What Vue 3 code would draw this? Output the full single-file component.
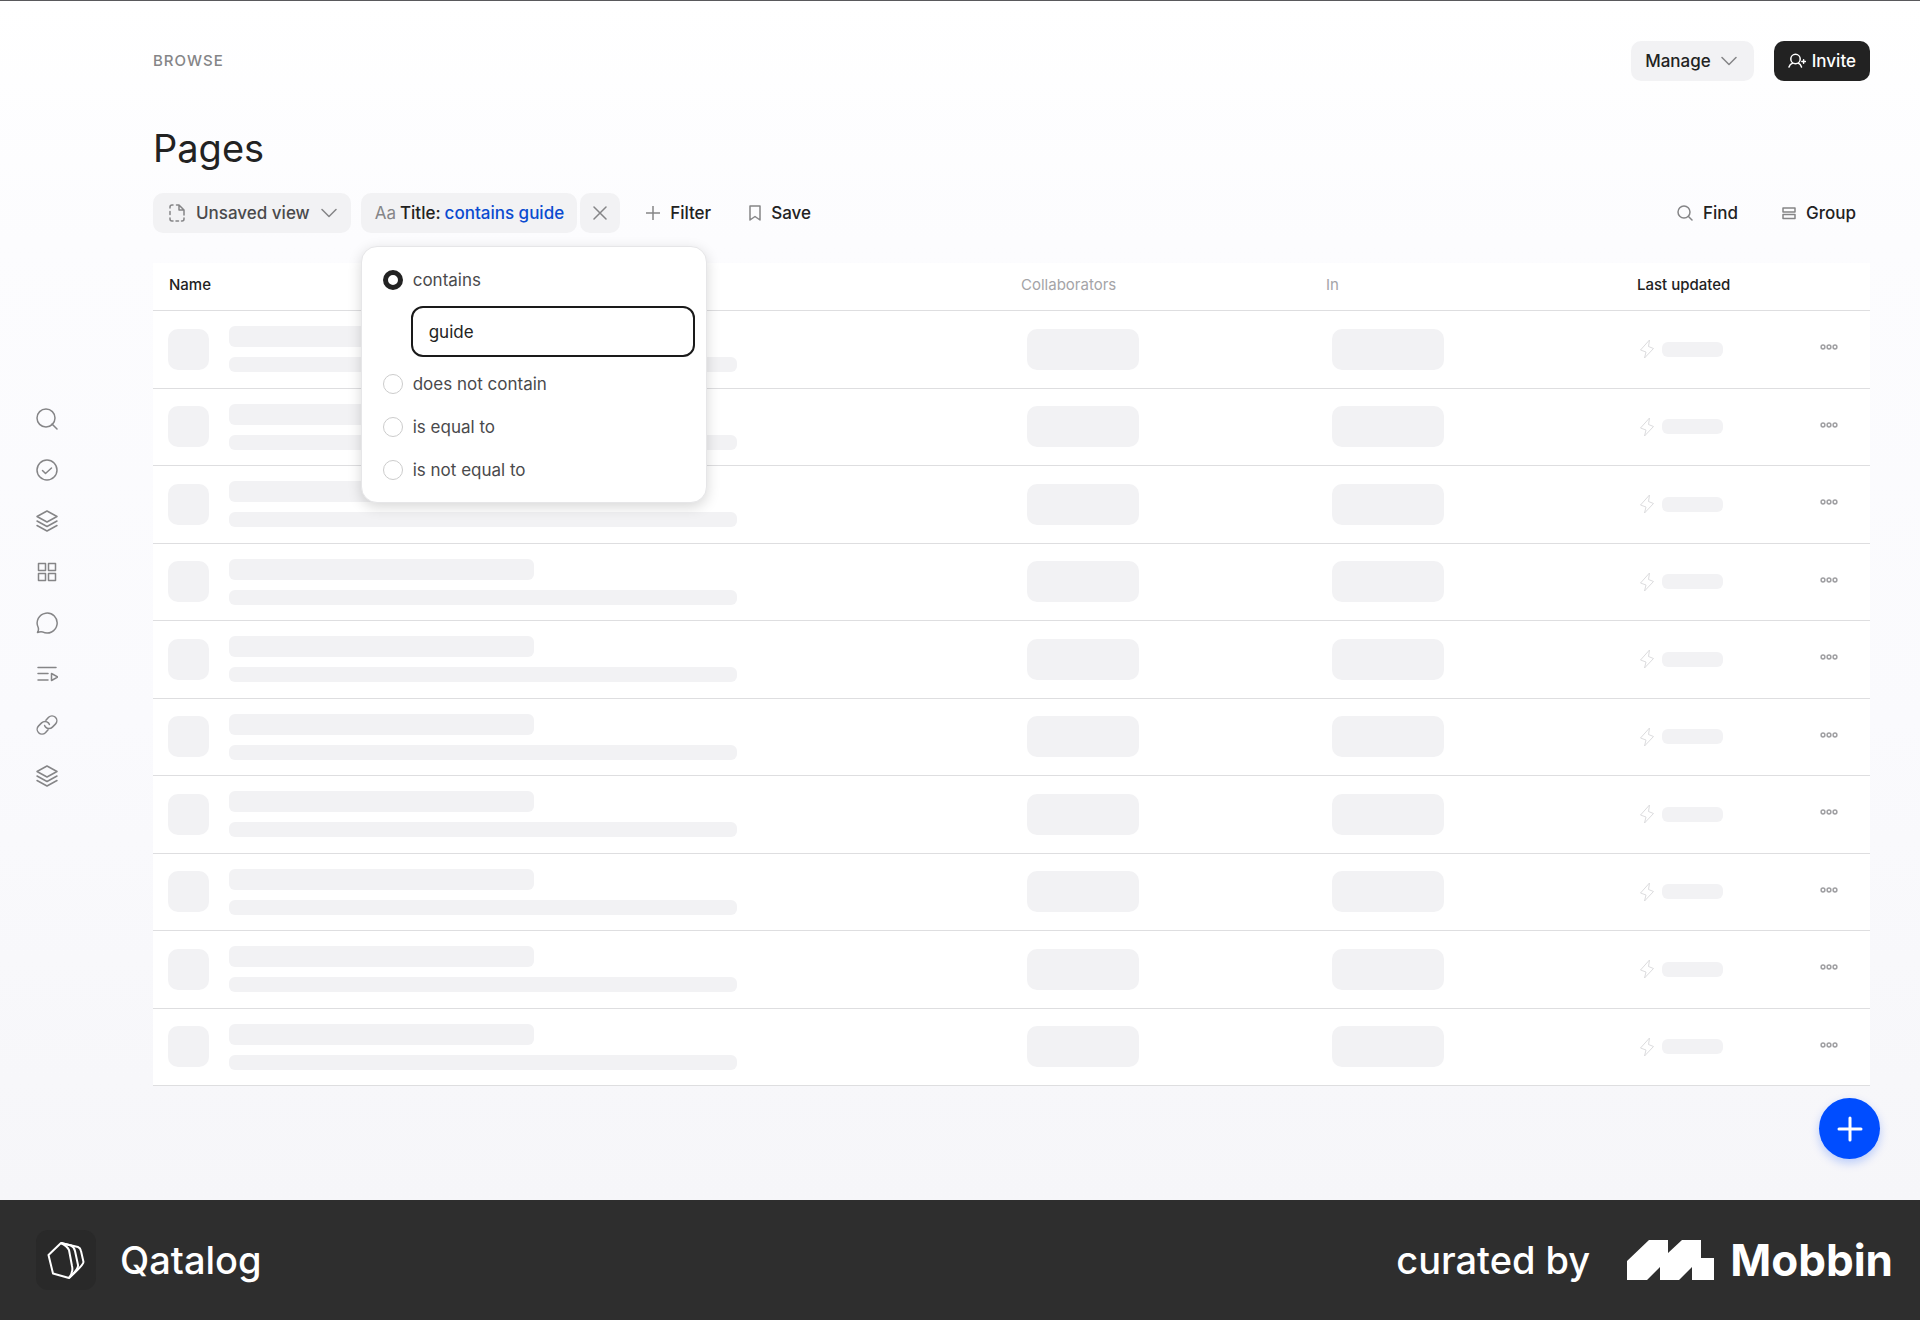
<script setup>
import { ref } from 'vue'

const rows = Array.from({ length: 10 }, (_, i) => i)
const condition = ref('contains')
const query = ref('guide')
const conditions = ['contains', 'does not contain', 'is equal to', 'is not equal to']

const layers = ['M11 1 21 6.500 11 12 1 6.500Z', 'M1 11 11 16.500 21 11', 'M1 15.500 11 21 21 15.500']
const navItems = [
  { label: 'Search', paths: ['M19 10a9 9 0 1 1-18 0 9 9 0 0 1 18 0Z', 'M16 16l5 5'] },
  { label: 'Tasks', paths: ['M21 11a10 10 0 1 1-20 0 10 10 0 0 1 20 0Z', 'M6.500 11.500l3 3 6-5.500'] },
  { label: 'Collections', paths: layers },
  { label: 'Apps', paths: ['M2.500 2.500h7v7h-7Z', 'M12.500 2.500h7v7h-7Z', 'M2.500 12.500h7v7h-7Z', 'M12.500 12.500h7v7h-7Z'] },
  { label: 'Chat', paths: ['M1.500 20.500Q3 18 2.200 15.500A10 10 0 1 1 6.500 19.900Q4 19.500 1.500 20.500Z'] },
  { label: 'Workflows', paths: ['M2 4.500h18', 'M2 10.500h10', 'M2 17h10', 'M15.500 10.500v7l6.500-3.500Z'] },
  { label: 'Links', paths: ['M9.900 6.300 12.600 3.300a4.800 4.800 0 0 1 6.800 6.800l-3 3a4.800 4.800 0 0 1-6.800 0 4.600 4.600 0 0 1-1-1.600', 'M12.100 15.700 9.400 18.700a4.800 4.800 0 0 1-6.800-6.800l3-3a4.800 4.800 0 0 1 6.800 0 4.600 4.600 0 0 1 1 1.600'] },
  { label: 'Library', paths: layers },
]
</script>

<template>
  <div class="page">
    <div class="app">
      <nav class="sidebar" aria-label="Main">
        <a v-for="item in navItems" :key="item.label" href="#" :aria-label="item.label">
          <svg class="icon" width="22" height="22" viewBox="0 0 22 22">
            <path v-for="d in item.paths" :key="d" :d="d" />
          </svg>
        </a>
      </nav>

      <main class="main">
        <header class="topbar">
          <span class="crumb">BROWSE</span>
          <div class="actions">
            <button class="btn soft manage" type="button">
              Manage
              <svg class="icon" width="16" height="10" viewBox="0 0 16 10"><path d="M1 1.500 8 8.500 15 1.500" /></svg>
            </button>
            <button class="btn dark" type="button">
              <svg class="icon" width="18" height="16" viewBox="0 0 18 16">
                <circle cx="7.500" cy="6" r="4.700" />
                <path d="M1 14Q2 11 4.500 10.300M13.500 14Q12.500 11 10.500 10.300M13.800 8.500h3.600M15.600 6.700v3.600" />
              </svg>
              Invite
            </button>
          </div>
        </header>

        <h1>Pages</h1>

        <div class="toolbar">
          <button class="btn soft view" type="button">
            <svg class="icon" width="16" height="18" viewBox="0 0 16 18">
              <path d="M4 1H3a2 2 0 0 0-2 2v1M1 7.500v3M1 14v1a2 2 0 0 0 2 2h1M7 17h2.500M12.500 17h.5a2 2 0 0 0 2-2v-1M15 11V6L10 1H7.500M10 1v5h5" />
            </svg>
            Unsaved view
            <svg class="icon" width="16" height="10" viewBox="0 0 16 10"><path d="M1 1.500 8 8.500 15 1.500" /></svg>
          </button>
          <div class="filter">
            <button class="btn soft chip" type="button">
              <span class="type">Aa</span> Title: <span class="value">contains guide</span>
            </button>
            <button class="btn soft remove" type="button" aria-label="Remove filter">
              <svg class="icon" width="14" height="14" viewBox="0 0 14 14"><path d="M1 1l12 12M13 1 1 13" /></svg>
            </button>

            <form class="popover" @submit.prevent>
              <template v-for="option in conditions" :key="option">
                <label class="option">
                  <input v-model="condition" type="radio" name="condition" :value="option" />
                  {{ option }}
                </label>
                <input
                  v-if="option === condition"
                  v-model="query"
                  class="query"
                  type="text"
                  aria-label="Title text"
                />
              </template>
            </form>
          </div>
          <button class="btn" type="button">
            <svg class="icon" width="14" height="14" viewBox="0 0 14 14"><path d="M7 0v14M0 7h14" /></svg>
            Filter
          </button>
          <button class="btn" type="button">
            <svg class="icon" width="12" height="16" viewBox="0 0 12 16"><path d="M1 1h10v14L6 11.500 1 15Z" /></svg>
            Save
          </button>
          <div class="tools">
            <button class="btn" type="button">
              <svg class="icon" width="16" height="16" viewBox="0 0 16 16">
                <circle cx="7" cy="7" r="6" /><path d="M11.500 11.500 15 15" />
              </svg>
              Find
            </button>
            <button class="btn" type="button">
              <svg class="icon" width="14" height="14" viewBox="0 0 14 14">
                <path d="M1 2h12v4H1ZM1 8.500h12v4H1Z" />
              </svg>
              Group
            </button>
          </div>
        </div>

        <table>
          <thead>
            <tr>
              <th class="name" scope="col">Name</th>
              <th class="collab muted" scope="col">Collaborators</th>
              <th class="in muted" scope="col">In</th>
              <th class="updated" scope="col">Last updated</th>
              <th class="more" scope="col" aria-label="Actions"></th>
            </tr>
          </thead>
          <tbody>
            <tr v-for="row in rows" :key="row">
              <td class="name">
                <div class="entry">
                  <div class="bone thumb"></div>
                  <div class="lines">
                    <div class="bone title"></div>
                    <div class="bone subtitle"></div>
                  </div>
                </div>
              </td>
              <td><div class="bone pill"></div></td>
              <td><div class="bone pill"></div></td>
              <td>
                <div class="stamp">
                  <svg class="bolt" width="16" height="20" viewBox="0 0 16 20">
                    <path d="M10.500 1 1.500 11 7 13 5.500 19 14.500 9.500 9.500 7.500Z" />
                  </svg>
                  <div class="bone date"></div>
                </div>
              </td>
              <td>
                <button class="dots" type="button" aria-label="More">
                  <svg width="18" height="6" viewBox="0 0 18 6">
                    <circle cx="3" cy="3" r="1.900" /><circle cx="9" cy="3" r="1.900" /><circle cx="15" cy="3" r="1.900" />
                  </svg>
                </button>
              </td>
            </tr>
          </tbody>
        </table>
      </main>

      <button class="fab" type="button" aria-label="Create">
        <svg width="26" height="26" viewBox="0 0 26 26"><path d="M13 2v22M2 13h22" /></svg>
      </button>
    </div>

    <footer>
      <div class="brand">
        <span class="tile">
          <svg width="38" height="38" viewBox="0 0 38 38">
            <path d="M14 2 1.500 14 6 32.500 22 37Q26.500 31 25 25L22 9Q20 5 14 2Z" />
            <path d="M14 2 24 4.500Q27 6 28 10L31 24Q31.500 28 22 37" />
            <path d="M14 2 31 6Q33.500 7 34 10L36.500 21Q36.500 24 22 37" />
          </svg>
        </span>
        Qatalog
      </div>
      <div class="credit">
        curated by
        <svg width="87" height="40" viewBox="0 0 87 40">
          <path d="M0 21 22 0H41V13L55 0H74V18H87V40H65V27L52 40H33V27L20 40H0Z" />
        </svg>
        <strong>Mobbin</strong>
      </div>
    </footer>
  </div>
</template>

<style>
body {
  margin: 0;
}
</style>

<style scoped>
.page {
  display: flex;
  flex-direction: column;
  min-height: 100vh;
  font-family: Inter, "Liberation Sans", sans-serif;
  font-size: 17px;
  color: #222;
}
.page *,
.page {
  box-sizing: border-box;
}
.app {
  position: relative;
  flex: 1;
  display: flex;
  border-top: 1px solid #59595c;
  background: linear-gradient(#fff 0, #fcfcfe 20%, #fafafd 60%, #f6f6f9 100%);
}
svg {
  display: block;
  flex: none;
}
.icon {
  fill: none;
  stroke: #858587;
  stroke-width: 1.5;
  stroke-linecap: round;
  stroke-linejoin: round;
}
.sidebar {
  flex: none;
  width: 153px;
  padding: 0 0 6px 36px;
  display: flex;
  flex-direction: column;
  justify-content: center;
  gap: 29px;
}
.sidebar a {
  width: 22px;
}
.main {
  flex: 1;
  min-width: 0;
  padding: 40px 50px 60px 0;
}
.topbar,
.actions,
.toolbar,
.filter,
.tools {
  display: flex;
  align-items: center;
}
.topbar {
  justify-content: space-between;
}
.actions {
  gap: 20px;
}
.crumb {
  padding-bottom: 2px;
  font-size: 15px;
  font-weight: 500;
  letter-spacing: 1px;
  color: #858587;
}
h1 {
  margin: 42px 0 20px;
  font-size: 38px;
  line-height: 50px;
  font-weight: 400;
}
.btn {
  height: 40px;
  padding: 0 14px;
  display: flex;
  align-items: center;
  gap: 10px;
  border: 0;
  border-radius: 10px;
  background: none;
  font: inherit;
  font-weight: 500;
  color: #222;
  white-space: nowrap;
}
.soft {
  background: #f2f2f4;
}
.manage {
  padding-right: 17px;
}
.dark {
  background: #222;
  color: #fff;
  gap: 6px;
}
.dark .icon {
  stroke: #fff;
}
.view {
  padding-left: 16px;
  gap: 11px;
  color: #4a4a4c;
}
.filter {
  position: relative;
  gap: 3px;
  margin: 0 12px 0 10px;
}
.chip {
  padding-right: 13px;
  gap: 4px;
}
.type {
  font-weight: 400;
  color: #858587;
}
.value {
  color: #0a4bd0;
}
.remove {
  width: 40px;
  padding: 0;
  justify-content: center;
}
.tools {
  margin-left: auto;
  gap: 16px;
}
.toolbar > .btn + .btn {
  margin-left: 10px;
}
.popover {
  position: absolute;
  z-index: 1;
  top: 53px;
  left: 0;
  width: 346px;
  padding: 11px 11px 11px 21px;
  border: 1px solid #e6e6e8;
  border-radius: 16px;
  background: #fff;
  box-shadow: 0 4px 14px rgba(0, 0, 0, 0.16);
  color: #4a4a4c;
}
.option {
  height: 43px;
  display: flex;
  align-items: center;
  gap: 10px;
}
.option input {
  appearance: none;
  width: 20px;
  height: 20px;
  margin: 0;
  border: 1px solid #ccc;
  border-radius: 50%;
  background: #fff;
}
.option input:checked {
  border: 5px solid #222;
}
.query {
  display: block;
  width: 284px;
  height: 51px;
  margin: 5px 0 5px 28px;
  padding: 0 16px;
  border: 2px solid #1a1a1a;
  border-radius: 12px;
  outline: 0;
  background: #fff;
  font: inherit;
  color: #222;
}
table {
  width: 100%;
  margin-top: 30px;
  table-layout: fixed;
  border-collapse: collapse;
  background: #fff;
}
th,
td {
  padding: 0;
  border-bottom: 1px solid #dedee0;
  text-align: left;
}
th {
  height: 47px;
  padding-bottom: 3px;
  font-size: 15px;
  font-weight: 500;
}
th.muted {
  font-weight: 400;
  color: #a4a4a7;
}
.name {
  padding-left: 16px;
}
td.name {
  padding-left: 15px;
}
.collab {
  width: 305px;
}
.in {
  width: 311px;
}
.updated {
  width: 183px;
}
.more {
  width: 50px;
}
td {
  height: 77px;
}
tr:nth-child(odd) td {
  height: 78px;
}
.entry {
  display: flex;
  align-items: center;
  gap: 20px;
}
.bone {
  border-radius: 6px;
  background: #f2f2f4;
}
.thumb {
  flex: none;
  width: 41px;
  height: 41px;
  border-radius: 10px;
}
.lines {
  flex: 1;
  display: grid;
  gap: 10px;
}
.title {
  width: 305px;
  height: 21px;
}
.subtitle {
  width: 508px;
  height: 15px;
}
.pill {
  width: 112px;
  height: 41px;
  margin-left: 6px;
  border-radius: 10px;
}
.stamp {
  display: flex;
  align-items: center;
  gap: 7px;
  padding-left: 2px;
}
.bolt {
  fill: none;
  stroke: #dcdcde;
}
.date {
  width: 61px;
  height: 15px;
}
.dots {
  display: block;
  padding: 0 0 4px;
  border: 0;
  background: none;
}
.dots svg {
  fill: none;
  stroke: #a0a0a3;
  stroke-width: 1.5;
}
.fab {
  position: absolute;
  right: 40px;
  bottom: 41px;
  width: 61px;
  height: 61px;
  padding: 0;
  display: flex;
  align-items: center;
  justify-content: center;
  border: 0;
  border-radius: 50%;
  background: #004dff;
  box-shadow: 0 4px 10px rgba(0, 77, 255, 0.25);
}
.fab svg {
  stroke: #fff;
  stroke-width: 3;
  stroke-linecap: round;
}
footer {
  height: 120px;
  padding: 0 27px 0 36px;
  display: flex;
  align-items: center;
  justify-content: space-between;
  background: #2e2e2e;
  color: #fff;
  font-size: 38px;
  font-weight: 500;
}
.brand,
.credit {
  display: flex;
  align-items: center;
}
.brand {
  gap: 24px;
}
.tile {
  width: 60px;
  height: 60px;
  display: grid;
  place-items: center;
  border-radius: 12px;
  background: #292929;
}
.tile svg {
  fill: none;
  stroke: #fff;
  stroke-width: 2;
  stroke-linejoin: round;
}
.credit svg {
  margin: 0 16px 0 37px;
  fill: #fff;
}
strong {
  font-size: 44px;
  font-weight: 700;
}
</style>
